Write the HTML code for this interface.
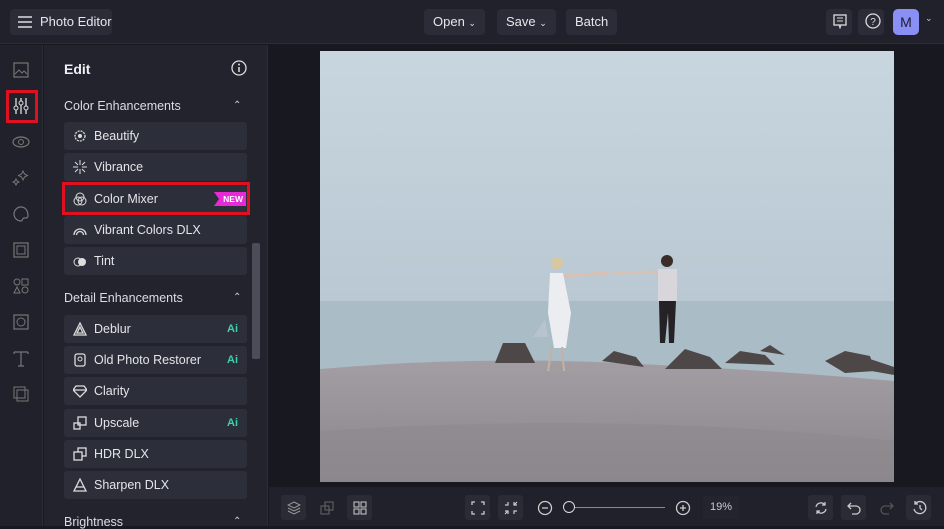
<!DOCTYPE html><html><head><style>
*{margin:0;padding:0;box-sizing:border-box}
body{width:944px;height:526px;overflow:hidden;background:#181920;font-family:"Liberation Sans",sans-serif;color:#e4e5ea;position:relative}
.top{position:absolute;left:0;top:0;width:944px;height:44px;background:#20212a;border-bottom:1px solid #2c2d37}
.btn{position:absolute;top:9px;height:26px;background:#2b2c37;border-radius:4px;font-size:13px;line-height:26px;padding:0 9px;color:#e6e7ec;white-space:nowrap}
.rail{position:absolute;left:0;top:45px;width:43px;height:481px;background:#20212a;border-right:1px solid #2c2d37}
.panel{position:absolute;left:44px;top:45px;width:224px;height:481px;background:#22232d;border-right:1px solid #2c2d37}
.item{position:absolute;left:20px;width:183px;height:28px;background:#2c2e39;border-radius:3px;font-size:12.5px;line-height:28px;padding-left:30px;color:#e4e5ea}
.item svg{position:absolute;left:9px;top:7px}
.ai{position:absolute;right:9px;top:0;color:#3ed1b0;font-size:11px;font-weight:bold}
.hd{position:absolute;left:20px;font-size:12.5px;color:#dcdde3}
.car{position:absolute;left:189px;font-size:10px;color:#ccc}
.ri{position:absolute;left:12px;width:18px;height:18px}
.bot{position:absolute;left:269px;top:487px;width:675px;height:39px;background:#20212a}
.bb{position:absolute;top:8px;width:25px;height:25px;border-radius:3px;background:#2a2b35}
</style></head><body>
<div class="top">
 <div class="btn" style="left:10px;width:102px;padding-left:30px">Photo Editor</div>
 <svg style="position:absolute;left:18px;top:16px" width="14" height="12"><path d="M0 1h14M0 6h14M0 11h14" stroke="#ddd" stroke-width="1.4"/></svg>
 <div class="btn" style="left:424px">Open <span style="font-size:9px">&#8964;</span></div>
 <div class="btn" style="left:497px">Save <span style="font-size:9px">&#8964;</span></div>
 <div class="btn" style="left:566px">Batch</div>
 <div class="btn" style="left:826px;width:26px"></div>
 <div class="btn" style="left:858px;width:26px"></div>
 <svg style="position:absolute;left:833px;top:14px" width="14" height="15"><rect x="1" y="1" width="12" height="10" fill="none" stroke="#ddd" stroke-width="1.3"/><path d="M4 4h6M4 7h6M6 11l1 3 1-3" stroke="#ddd" fill="none"/></svg>
 <svg style="position:absolute;left:865px;top:13px" width="16" height="16"><circle cx="8" cy="8" r="7" fill="none" stroke="#ddd" stroke-width="1.3"/><text x="8" y="12" font-size="10" fill="#ddd" text-anchor="middle" font-family="Liberation Sans">?</text></svg>
 <div style="position:absolute;left:893px;top:9px;width:26px;height:26px;border-radius:5px;background:#8a8ff5;color:#1c1d30;font-size:14px;line-height:26px;text-align:center">M</div>
 <div style="position:absolute;left:925px;top:13px;font-size:9px;color:#ccc">&#8964;</div>
</div>
<div class="rail">
 <svg class="ri" style="top:16px" viewBox="0 0 18 18"><rect x="2" y="2" width="14" height="14" fill="none" stroke="#777" stroke-width="1.2"/><path d="M3 13l4-4 3 3 2-2 3 3" stroke="#777" fill="none"/></svg>
 <div style="position:absolute;left:6px;top:45px;width:32px;height:33px;border:3px solid #e01020"></div>
 <svg class="ri" style="top:52px" viewBox="0 0 18 18"><path d="M4 1v16M9 1v16M14 1v16" stroke="#ddd" stroke-width="1.3"/><circle cx="4" cy="11" r="2" fill="#20212a" stroke="#ddd"/><circle cx="9" cy="6" r="2" fill="#20212a" stroke="#ddd"/><circle cx="14" cy="11" r="2" fill="#20212a" stroke="#ddd"/></svg>
 <svg class="ri" style="top:88px" viewBox="0 0 18 18"><ellipse cx="9" cy="9" rx="8" ry="5" fill="none" stroke="#777" stroke-width="1.2"/><circle cx="9" cy="9" r="2.5" fill="none" stroke="#777"/></svg>
 <svg class="ri" style="top:124px" viewBox="0 0 18 18"><path d="M11 2l1.5 3 3 1.5-3 1.5L11 11 9.5 8 6.5 6.5l3-1.5zM4 10l1 2 2 1-2 1-1 2-1-2-2-1 2-1z" fill="none" stroke="#777"/></svg>
 <svg class="ri" style="top:160px" viewBox="0 0 18 18"><path d="M9 2a7 7 0 100 14c2 0 1-3 3-3h2a2 2 0 002-2C16 5 13 2 9 2z" fill="none" stroke="#777" stroke-width="1.2"/></svg>
 <svg class="ri" style="top:196px" viewBox="0 0 18 18"><rect x="2" y="2" width="14" height="14" fill="none" stroke="#777" stroke-width="1.2"/><rect x="5" y="5" width="8" height="8" fill="none" stroke="#777"/></svg>
 <svg class="ri" style="top:232px" viewBox="0 0 18 18"><circle cx="5" cy="5" r="3" fill="none" stroke="#777"/><rect x="10" y="2" width="6" height="6" fill="none" stroke="#777"/><path d="M5 10l3 6H2z" fill="none" stroke="#777"/><circle cx="13" cy="13" r="3" fill="none" stroke="#777"/></svg>
 <svg class="ri" style="top:268px" viewBox="0 0 18 18"><rect x="2" y="2" width="14" height="14" fill="none" stroke="#777" stroke-width="1.2"/><circle cx="9" cy="9" r="4" fill="none" stroke="#777"/></svg>
 <svg class="ri" style="top:304px" viewBox="0 0 18 18"><path d="M2 3h14M9 3v14M6 17h6M2 3v2M16 3v2" stroke="#777" stroke-width="1.2" fill="none"/></svg>
 <svg class="ri" style="top:340px" viewBox="0 0 18 18"><rect x="2" y="2" width="11" height="11" fill="none" stroke="#777"/><rect x="5" y="5" width="11" height="11" fill="none" stroke="#777"/></svg>
</div>
<div class="panel">
 <div style="position:absolute;left:20px;top:16px;font-size:14px;font-weight:bold;color:#f0f0f4">Edit</div>
 <svg style="position:absolute;left:187px;top:15px" width="16" height="16"><circle cx="8" cy="8" r="7" fill="none" stroke="#ddd" stroke-width="1.3"/><path d="M8 7v5" stroke="#ddd" stroke-width="1.5"/><circle cx="8" cy="4.5" r="1" fill="#ddd"/></svg>
 <div class="hd" style="top:54px">Color Enhancements</div><div class="car" style="top:55px">&#8963;</div>
 <div class="item" style="top:77px">Beautify<svg width="14" height="14"><circle cx="7" cy="7" r="5" fill="none" stroke="#ddd" stroke-width="1.3" stroke-dasharray="2 1"/><circle cx="7" cy="7" r="2" fill="#ddd"/></svg></div>
 <div class="item" style="top:108px">Vibrance<svg width="14" height="14"><path d="M7 0v5M7 9v5M0 7h5M9 7h5M2 2l3 3M9 9l3 3M12 2L9 5M5 9l-3 3" stroke="#ddd"/></svg></div>
 <div class="item" style="top:140px">Color Mixer<svg width="14" height="14"><circle cx="7" cy="5" r="4" fill="none" stroke="#ddd"/><circle cx="5" cy="9" r="4" fill="none" stroke="#ddd"/><circle cx="9" cy="9" r="4" fill="none" stroke="#ddd"/></svg>
  <div style="position:absolute;right:1px;top:7px;width:32px;height:14px;background:#e62bd6;color:#fff;font-size:8.5px;font-weight:bold;line-height:14px;text-align:right;padding-right:3px;clip-path:polygon(0 0,100% 0,100% 100%,0 100%,5px 50%)">NEW</div></div>
 <div style="position:absolute;left:18px;top:137px;width:188px;height:33px;border:3px solid #e01020"></div>
 <div class="item" style="top:171px">Vibrant Colors DLX<svg width="14" height="14"><path d="M1 12a6 6 0 0112 0M3.5 12a3.5 3.5 0 017 0" fill="none" stroke="#ddd" stroke-width="1.3"/></svg></div>
 <div class="item" style="top:202px">Tint<svg width="14" height="14"><circle cx="5" cy="8" r="4" fill="none" stroke="#ddd"/><circle cx="9" cy="8" r="4" fill="#ddd"/></svg></div>
 <div class="hd" style="top:246px">Detail Enhancements</div><div class="car" style="top:247px">&#8963;</div>
 <div class="item" style="top:270px">Deblur<div class="ai">Ai</div><svg width="14" height="14"><path d="M7 1l6 12H1z M7 5l3 6H4z" fill="none" stroke="#ddd" stroke-width="1.3"/></svg></div>
 <div class="item" style="top:301px">Old Photo Restorer<div class="ai">Ai</div><svg width="14" height="14"><rect x="2" y="1" width="10" height="12" rx="2" fill="none" stroke="#ddd" stroke-width="1.3"/><circle cx="7" cy="6" r="2" fill="none" stroke="#ddd"/></svg></div>
 <div class="item" style="top:332px">Clarity<svg width="14" height="14"><path d="M3 2h8l3 4-7 7-7-7zM0 6h14" fill="none" stroke="#ddd" stroke-width="1.3"/></svg></div>
 <div class="item" style="top:364px">Upscale<div class="ai">Ai</div><svg width="14" height="14"><rect x="5" y="1" width="8" height="8" fill="none" stroke="#ddd" stroke-width="1.3"/><rect x="1" y="7" width="6" height="6" fill="none" stroke="#ddd" stroke-width="1.3"/></svg></div>
 <div class="item" style="top:395px">HDR DLX<svg width="14" height="14"><rect x="5" y="1" width="8" height="8" fill="none" stroke="#ddd" stroke-width="1.3"/><rect x="1" y="5" width="8" height="8" fill="#2c2e39" stroke="#ddd" stroke-width="1.3"/></svg></div>
 <div class="item" style="top:426px">Sharpen DLX<svg width="14" height="14"><path d="M7 1l6 12H1zM3 9h8" fill="none" stroke="#ddd" stroke-width="1.3"/></svg></div>
 <div class="hd" style="top:470px">Brightness</div><div class="car" style="top:471px">&#8963;</div>
 <div style="position:absolute;left:208px;top:198px;width:8px;height:116px;background:#4a4c58;border-radius:2px"></div>
</div>
<svg style="position:absolute;left:320px;top:51px" width="574" height="431">
<defs><linearGradient id="s" x1="0" y1="0" x2="0" y2="1"><stop offset="0" stop-color="#c8d6df"/><stop offset="1" stop-color="#b9c8d2"/></linearGradient>
<linearGradient id="b" x1="0" y1="0" x2="0" y2="1"><stop offset="0" stop-color="#a39ea3"/><stop offset="1" stop-color="#8a858b"/></linearGradient></defs>
<rect width="574" height="252" fill="url(#s)"/>
<rect y="250" width="574" height="100" fill="#aabcc6"/>
<path d="M0 318 Q150 305 300 312 T574 330 V431 H0Z" fill="url(#b)"/>
<path d="M175 312l8-20 22 0 10 20z M282 310l12-10 22 6 8 10z M345 318l20-20 25 8 12 12z M405 312l15-12 25 4 10 10z M440 300l10-6 15 10z M505 310l20-10 25 5 5 15-30 2z M540 318l10-10 24 8v8z" fill="#4e4748"/>
<path d="M0 380 Q300 360 574 390 V431 H0Z" fill="#8d888c" opacity=".6"/>
<g fill="#ecedf0"><path d="M230 222h13l8 40-5 35h-12l-6-35z"/><circle cx="237" cy="212" r="6" fill="#d8c8a0"/></g>
<path d="M225 268l-12 18 15 0z" fill="#b7c3ce"/>
<path d="M232 296l-4 24M242 296l2 24" stroke="#c8b0a0" stroke-width="2"/>
<path d="M244 225l45-3" stroke="#d9c0b0" stroke-width="3"/>
<g><circle cx="347" cy="210" r="6" fill="#3a2c28"/><rect x="338" y="218" width="19" height="32" fill="#d8d6da"/><path d="M339 250h17l-2 42h-5l-1-30-3 30h-5z" fill="#252225"/></g>
<path d="M293 222l45-1" stroke="#d9c0b0" stroke-width="3"/>
</svg>
<div class="bot">
 <div class="bb" style="left:12px"></div><div class="bb" style="left:78px"></div>
 <div class="bb" style="left:196px"></div><div class="bb" style="left:229px"></div>
 <div class="bb" style="left:539px"></div><div class="bb" style="left:572px"></div><div class="bb" style="left:637px"></div>
 <svg style="position:absolute;left:18px;top:14px" width="14" height="14"><path d="M7 1l6 3-6 3-6-3zM1 7l6 3 6-3M1 10l6 3 6-3" fill="none" stroke="#999"/></svg>
 <svg style="position:absolute;left:51px;top:14px" width="14" height="14"><rect x="1" y="5" width="8" height="8" fill="none" stroke="#666"/><rect x="5" y="1" width="8" height="8" fill="none" stroke="#666"/></svg>
 <svg style="position:absolute;left:84px;top:14px" width="14" height="14"><rect x="1" y="1" width="5" height="5" fill="none" stroke="#ccc"/><rect x="8" y="1" width="5" height="5" fill="none" stroke="#ccc"/><rect x="1" y="8" width="5" height="5" fill="none" stroke="#ccc"/><rect x="8" y="8" width="5" height="5" fill="none" stroke="#ccc"/></svg>
 <svg style="position:absolute;left:202px;top:14px" width="14" height="14"><path d="M1 4V1h3M10 1h3v3M13 10v3h-3M4 13H1v-3" fill="none" stroke="#ccc" stroke-width="1.3"/></svg>
 <svg style="position:absolute;left:235px;top:14px" width="14" height="14"><path d="M1 4h3V1M13 4h-3V1M1 10h3v3M13 10h-3v3M10 4l3-3M4 10l-3 3" fill="none" stroke="#ccc" stroke-width="1.2"/></svg>
 <svg style="position:absolute;left:268px;top:13px" width="16" height="16"><circle cx="8" cy="8" r="6.5" fill="none" stroke="#ccc" stroke-width="1.3"/><path d="M5 8h6" stroke="#ccc" stroke-width="1.3"/></svg>
 <div style="position:absolute;left:301px;top:20px;width:95px;height:1px;background:#888"></div>
 <div style="position:absolute;left:294px;top:14px;width:12px;height:12px;border-radius:50%;border:1.5px solid #ddd;background:#20212a"></div>
 <svg style="position:absolute;left:406px;top:13px" width="16" height="16"><circle cx="8" cy="8" r="6.5" fill="none" stroke="#ccc" stroke-width="1.3"/><path d="M5 8h6M8 5v6" stroke="#ccc" stroke-width="1.3"/></svg>
 <div style="position:absolute;left:434px;top:9px;width:36px;height:23px;background:#23242e;font-size:11px;line-height:23px;text-align:center;color:#ccc">19%</div>
 <svg style="position:absolute;left:545px;top:14px" width="14" height="14"><path d="M2 6a5 5 0 019-2M12 8a5 5 0 01-9 2M11 1v3H8M3 13v-3h3" fill="none" stroke="#ccc" stroke-width="1.2"/></svg>
 <svg style="position:absolute;left:578px;top:14px" width="14" height="14"><path d="M4 2L1 5l3 3M1 5h8a4 4 0 010 8H5" fill="none" stroke="#ccc" stroke-width="1.3"/></svg>
 <svg style="position:absolute;left:611px;top:14px" width="14" height="14"><path d="M10 2l3 3-3 3M13 5H5a4 4 0 000 8h4" fill="none" stroke="#555" stroke-width="1.3"/></svg>
 <svg style="position:absolute;left:643px;top:13px" width="16" height="16"><path d="M3 4a6 6 0 11-1 5M3 1v3h3M8 5v3l2 2" fill="none" stroke="#ccc" stroke-width="1.3"/></svg>
</div>
</body></html>
